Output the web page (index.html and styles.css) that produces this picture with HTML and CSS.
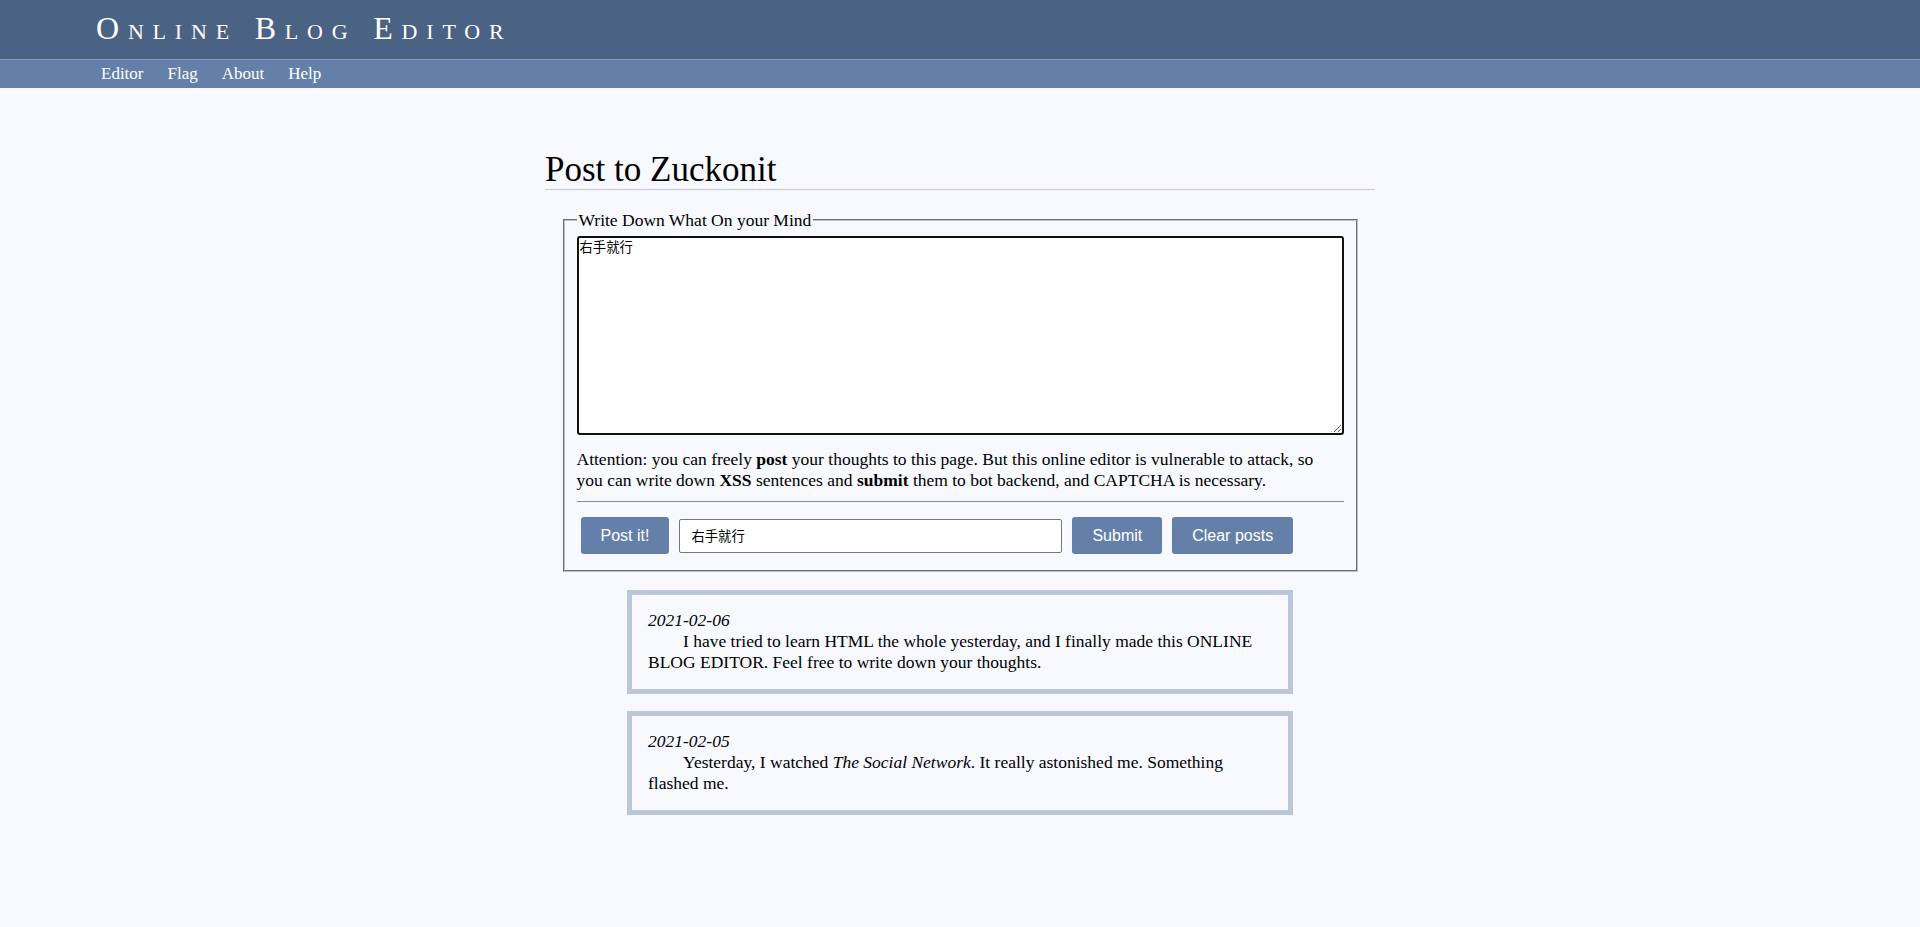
FILE: index.html
```html
<!DOCTYPE html>
<html lang="en">
<head>
<meta charset="utf-8">
<title>Online Blog Editor</title>
<link rel="stylesheet" href="styles.css">
</head>
<body>
<header class="masthead">
  <div class="brand">Online Blog Editor</div>
</header>
<nav class="topnav">
  <a class="navlink" href="#">Editor</a>
  <a class="navlink" href="#">Flag</a>
  <a class="navlink" href="#">About</a>
  <a class="navlink" href="#">Help</a>
</nav>
<main class="page">
  <h1 class="page-title">Post to Zuckonit</h1>
  <form class="editor">
    <fieldset class="editor-box">
      <legend class="editor-legend">Write Down What On your Mind</legend>
      <textarea class="editor-text">右手就行</textarea>
      <p class="notice">Attention: you can freely <b>post</b> your thoughts to this page. But this online editor is vulnerable to attack, so you can write down <b>XSS</b> sentences and <b>submit</b> them to bot backend, and CAPTCHA is necessary.</p>
      <hr class="divider">
      <div class="actions">
        <button type="button" class="btn">Post it!</button>
        <input class="captcha" type="text" value="右手就行">
        <button type="button" class="btn">Submit</button>
        <button type="button" class="btn">Clear posts</button>
      </div>
    </fieldset>
  </form>
  <section class="posts">
    <article class="post">
      <div class="post-date">2021-02-06</div>
      <p class="post-body">I have tried to learn HTML the whole yesterday, and I finally made this ONLINE BLOG EDITOR. Feel free to write down your thoughts.</p>
    </article>
    <article class="post">
      <div class="post-date">2021-02-05</div>
      <p class="post-body">Yesterday, I watched <i>The Social Network</i>. It really astonished me. Something flashed me.</p>
    </article>
  </section>
</main>
</body>
</html>
```
FILE: styles.css
```css
html, body {
  margin: 0;
  padding: 0;
}
body {
  background: #f8f8ff;
  font-family: "Liberation Serif", "Times New Roman", serif;
  font-size: 17.5px;
  color: #000;
  min-height: 927px;
}
.masthead {
  background: #4a6283;
  height: 59px;
  padding-left: 96px;
  display: flex;
  align-items: center;
  border-bottom: 1px solid #8a9fbd;
}
.brand {
  color: #fff;
  font-size: 32px;
  font-variant: small-caps;
  letter-spacing: 0.275em;
  padding-bottom: 2px;
}
.topnav {
  background: #6580a8;
  height: 28px;
  display: flex;
  align-items: center;
  padding-left: 101px;
  gap: 24px;
}
.navlink {
  color: #fff;
  text-decoration: none;
  font-size: 17px;
}
.page {
  width: 830px;
  margin: 0 auto;
  padding-top: 62px;
}
.page-title {
  font-weight: normal;
  font-size: 35px;
  line-height: 39px;
  margin: 0 0 20px;
  padding: 0;
  border-bottom: 1px solid #c4c8d2;
}
.editor {
  margin: 0;
}
.editor-box {
  width: 767px;
  margin: 0 auto;
  padding: 6px 12px 12px;
  border: 2px groove #c0c0c0;
}
.editor-legend {
  padding: 0 2px;
  line-height: 20px;
}
.editor-text {
  display: block;
  box-sizing: border-box;
  width: 767px;
  height: 199px;
  margin: 0;
  border: 2px solid #111;
  border-radius: 3px;
  padding: 1px;
  font-family: "Noto Sans CJK SC", "DejaVu Sans Mono", monospace;
  font-size: 13.33px;
  line-height: 16px;
  background: #fff;
  resize: both;
}
.notice {
  margin: 14px 0 0;
  line-height: 21px;
}
.divider {
  margin: 10px 0 0;
  border: 0;
  border-top: 1px solid #8a8a8a;
  height: 0;
}
.actions {
  display: flex;
  align-items: center;
  gap: 10px;
  padding: 15px 4px 4px;
}
.btn {
  height: 37px;
  padding: 0 20px;
  border: 0;
  border-radius: 3px;
  background: #6580a8;
  color: #fff;
  font-family: "Liberation Sans", Arial, sans-serif;
  font-size: 16px;
}
.captcha {
  box-sizing: border-box;
  width: 383px;
  height: 34px;
  border: 1px solid #767676;
  border-radius: 2px;
  padding: 0 11px;
  font-family: "Noto Sans CJK SC", sans-serif;
  font-size: 13.33px;
  background: #fff;
}
.posts {
  display: flex;
  flex-direction: column;
  align-items: center;
  gap: 17px;
  margin-top: 18px;
}
.post {
  box-sizing: border-box;
  width: 666px;
  border: 5px solid #bbc7d7;
  padding: 15px 16px 16px;
  line-height: 21px;
}
.post-date {
  font-style: italic;
}
.post-body {
  margin: 0;
  text-indent: 2em;
}
```
